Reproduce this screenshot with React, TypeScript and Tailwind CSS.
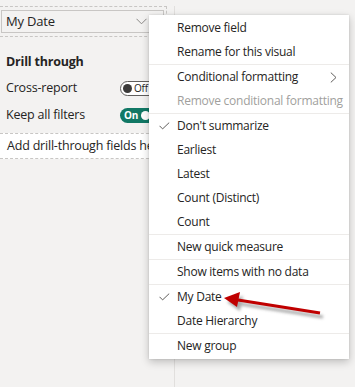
import React from "react";

const FONT = { fontFamily: '"Segoe UI", "Open Sans", "Noto Sans", sans-serif' };

type Item =
  | { kind: "sep" }
  | { kind: "item"; label: string; checked?: boolean; disabled?: boolean; submenu?: boolean };

const MENU: Item[] = [
  { kind: "item", label: "Remove field" },
  { kind: "item", label: "Rename for this visual" },
  { kind: "sep" },
  { kind: "item", label: "Conditional formatting", submenu: true },
  { kind: "item", label: "Remove conditional formatting", disabled: true },
  { kind: "sep" },
  { kind: "item", label: "Don't summarize", checked: true },
  { kind: "item", label: "Earliest" },
  { kind: "item", label: "Latest" },
  { kind: "item", label: "Count (Distinct)" },
  { kind: "item", label: "Count" },
  { kind: "sep" },
  { kind: "item", label: "New quick measure" },
  { kind: "sep" },
  { kind: "item", label: "Show items with no data" },
  { kind: "sep" },
  { kind: "item", label: "My Date", checked: true },
  { kind: "item", label: "Date Hierarchy" },
  { kind: "sep" },
  { kind: "item", label: "New group" },
];

function Check() {
  return (
    <svg width="11" height="8" viewBox="0 0 11 8" className="text-[#605e5c]">
      <path d="M0.5 3.8 L3.6 6.9 L10.2 0.6" fill="none" stroke="currentColor" strokeWidth="1" />
    </svg>
  );
}

function Chevron() {
  return (
    <svg width="7" height="11" viewBox="0 0 7 11" className="text-[#605e5c]">
      <path d="M0.8 0.6 L6 5.5 L0.8 10.4" fill="none" stroke="currentColor" strokeWidth="1" />
    </svg>
  );
}

function ContextMenu() {
  return (
    <div className="absolute left-[149px] top-[15px] w-[200px] bg-white py-px tracking-[-0.25px] shadow-[0_3px_8px_rgba(0,0,0,0.22),0_0_2px_rgba(0,0,0,0.12)]">
      {MENU.map((it, i) =>
        it.kind === "sep" ? (
          <div key={i} className="h-px bg-[#edebe9]" />
        ) : (
          <div
            key={i}
            className={`flex h-[24px] items-center text-[12px] ${it.disabled ? "text-[#a19f9d]" : "text-[#252423]"}`}
          >
            <span className="flex w-[28px] justify-end pr-[7px]">{it.checked && <Check />}</span>
            <span className="flex-1 whitespace-nowrap">{it.label}</span>
            {it.submenu && (
              <span className="pr-[12px]">
                <Chevron />
              </span>
            )}
          </div>
        )
      )}
    </div>
  );
}

function RedArrow() {
  return (
    <svg className="pointer-events-none absolute left-0 top-0" width="355" height="387" viewBox="0 0 355 387">
      <defs>
        <filter id="blur" x="-20%" y="-50%" width="140%" height="200%">
          <feGaussianBlur stdDeviation="1.6" />
        </filter>
      </defs>
      <g opacity="0.5" filter="url(#blur)" transform="translate(3 4)">
        <path d="M320 313 L238 300" stroke="#555" strokeWidth="3" />
        <polygon points="224,298 240,292 237,307" fill="#555" />
      </g>
      <path d="M320 313 L238 300" stroke="#c00000" strokeWidth="3" />
      <polygon points="224,298 240,292 237,307" fill="#c00000" />
    </svg>
  );
}

function Toggle({ on }: { on: boolean }) {
  if (on) {
    return (
      <div className="flex h-[15px] w-[40px] shrink-0 items-center rounded-full bg-[#117865] pl-[4px] pr-[2px] text-[10px] font-bold text-white">
        <span className="leading-none">On</span>
        <span className="ml-[3px] h-[9px] w-[9px] rounded-full bg-white" />
      </div>
    );
  }
  return (
    <div className="flex h-[15px] w-[40px] shrink-0 items-center rounded-full border border-[#605e5c] bg-white pl-[2px] text-[10px] text-[#252423]">
      <span className="h-[9px] w-[9px] rounded-full bg-[#3b3a39]" />
      <span className="ml-[2px] leading-none">Off</span>
    </div>
  );
}

export default function App() {
  return (
    <div className="relative h-[387px] w-[355px] overflow-hidden bg-[#f3f2f1]" style={FONT}>
      <div className="h-full w-[175px] border-r border-[#e1dfdd] tracking-[-0.2px]">
        {/* field well */}
        <div className="mt-[6px] w-[167px] border-y border-r border-dashed border-[#c8c6c4] py-[3px] pl-[1px] pr-[2px]">
          <div className="flex h-[23px] items-center justify-between border border-[#c8c6c4] bg-[#f3f2f1] pl-[4px] pr-[16px] text-[13px] text-[#252423]">
            <span>My Date</span>
            <svg width="11" height="7" viewBox="0 0 11 7" className="text-[#8a8886]">
              <path d="M0.5 0.8 L5.5 5.8 L10.5 0.8" fill="none" stroke="currentColor" strokeWidth="1" />
            </svg>
          </div>
        </div>

        <div className="px-[6px] pt-[16px] text-[#252423]">
          <div className="text-[12.5px] font-bold leading-[18px]">Drill through</div>
          <div className="mt-[7px] flex h-[20px] items-center text-[12.5px]">
            <span className="w-[114px]">Cross-report</span>
            <Toggle on={false} />
          </div>
          <div className="mt-[7px] flex h-[20px] items-center text-[12.5px]">
            <span className="w-[114px]">Keep all filters</span>
            <Toggle on={true} />
          </div>
        </div>

        <div className="mt-[8px] flex h-[26px] items-center overflow-hidden whitespace-nowrap border-y border-dashed border-[#c8c6c4] bg-white pl-[7px] text-[12.5px] text-[#252423]">
          Add drill-through fields here
        </div>
      </div>

      <ContextMenu />
      <RedArrow />
    </div>
  );
}
